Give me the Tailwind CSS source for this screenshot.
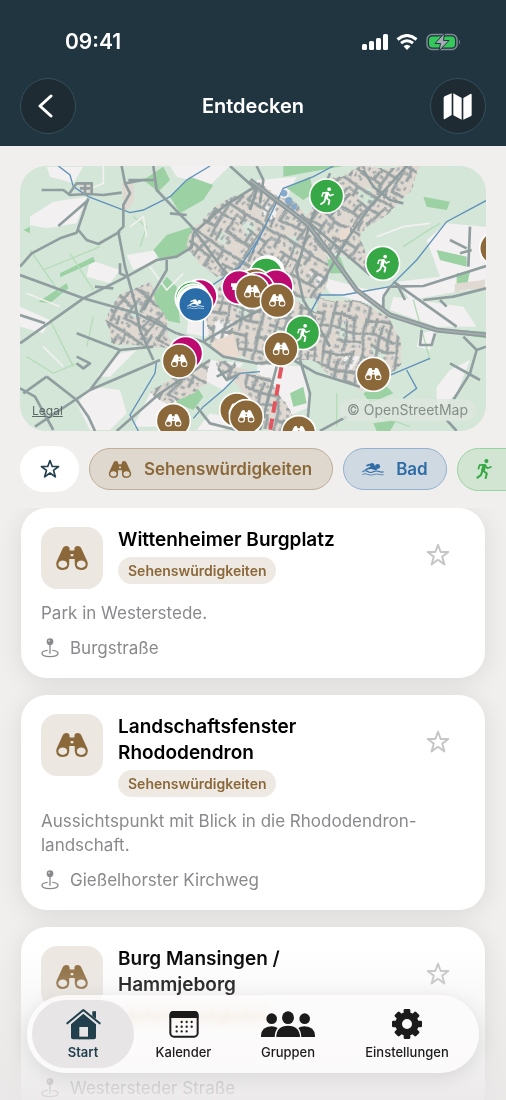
<!DOCTYPE html>
<html lang="de">
<head>
  <meta charset="UTF-8" />
  <meta name="viewport" content="width=device-width, initial-scale=1.0"/>
  <title>Entdecken</title>
  <script src="https://cdn.jsdelivr.net/npm/@tailwindcss/browser@4"></script>
</head>
<body class="bg-[#f0efed] font-['Inter','Liberation_Sans',sans-serif] text-black">

  <!-- Shared icons -->
  <svg class="hidden">
    <symbol id="binoculars" viewBox="0 0 92 70">
      <path fill="currentColor" fill-rule="evenodd" d="M18 9Q21 0 30 0Q38 0 39 8V13H53V8Q54 0 62 0Q71 0 74 9L90 44Q92 48 92 53Q91 70 73 70Q54 70 54 52V38H38V52Q38 70 19 70Q1 70 0 53Q0 48 2 44ZM42 23V30H50V23ZM19 42A13 11 0 1 0 19 64A13 11 0 1 0 19 42ZM73 42A13 11 0 1 0 73 64A13 11 0 1 0 73 42Z"/>
    </symbol>
    <symbol id="runner" viewBox="0 0 46 58">
      <circle cx="30" cy="6" r="6" fill="currentColor"/>
      <g fill="none" stroke="currentColor" stroke-linecap="round" stroke-linejoin="round">
        <path stroke-width="11" d="M24 20L20 32"/>
        <path stroke-width="5" d="M22 17L10 18L7 28M26 18L33 27L43 23"/>
        <path stroke-width="6" d="M21 34L31 42L28 55M18 36L14 47L4 54"/>
      </g>
    </symbol>
    <symbol id="swimmer" viewBox="0 0 62 38">
      <circle cx="44" cy="12" r="7" fill="currentColor"/>
      <path fill="currentColor" d="M13 7L28 2Q31 1 33 4L43 21Q36 24 30 20Q22 17 12 23L7 21L24 12L22 9L14 12Q10 10 13 7Z"/>
      <path fill="none" stroke="currentColor" stroke-width="3" d="M1 27Q8 21 16 26T32 27T48 26T61 27"/>
      <path fill="none" stroke="currentColor" stroke-width="2" d="M1 35Q8 30 16 34T32 35T48 34T61 35"/>
    </symbol>
    <symbol id="star" viewBox="0 0 24 24">
      <path fill="none" stroke="currentColor" stroke-width="2" stroke-linejoin="round" d="M12 1.8L14.7 9H22.3L16.2 13.6L18.4 21.4L12 16.8L5.6 21.4L7.8 13.6L1.7 9H9.3Z"/>
    </symbol>
    <symbol id="place" viewBox="0 0 52 60">
      <circle cx="26" cy="11" r="10" fill="currentColor"/>
      <circle cx="23" cy="8" r="3" fill="#fff" opacity=".6"/>
      <path fill="none" stroke="currentColor" stroke-width="4" stroke-linecap="round" d="M26 20V46"/>
      <path fill="none" stroke="currentColor" stroke-width="4" d="M19 37C8 38 2 42 2 46C2 52 12 56 26 56S50 52 50 46C50 42 44 38 33 37"/>
    </symbol>
    <symbol id="pin-sight" viewBox="0 0 108 108">
      <circle cx="54" cy="54" r="51" fill="#8a683a" stroke="#fff" stroke-width="5"/>
      <use href="#binoculars" x="29" y="34" width="50" height="38" color="#fff"/>
    </symbol>
    <symbol id="pin-run" viewBox="0 0 108 108">
      <circle cx="54" cy="54" r="51" fill="#36a946" stroke="#fff" stroke-width="5"/>
      <use href="#runner" x="33" y="28" width="44" height="54" color="#fff"/>
    </symbol>
    <symbol id="pin-swim" viewBox="0 0 108 108">
      <circle cx="54" cy="54" r="51" fill="#2b6da8" stroke="#fff" stroke-width="5"/>
      <use href="#swimmer" x="28" y="37" width="52" height="32" color="#fff"/>
    </symbol>
    <symbol id="pin-food" viewBox="0 0 108 108">
      <circle cx="54" cy="54" r="51" fill="#bd0a70" stroke="#fff" stroke-width="5"/>
      <path d="M30 42H50V52H42V62H34V52H30Z" fill="#fff"/>
    </symbol>
  </svg>

  <div class="relative flex h-dvh flex-col overflow-hidden">

    <header class="bg-[#213540] pb-3 text-white">
      <!-- Status bar -->
      <div class="flex items-center justify-between pt-7 pr-11 pl-[65px]">
        <span class="text-[21px] leading-7 font-semibold">09:41</span>
        <div class="flex items-center gap-2">
          <svg class="h-4 w-[26px]" viewBox="0 0 26 16" fill="#fff">
            <rect x="0" y="10" width="5" height="6" rx="1.5"/><rect x="7" y="7" width="5" height="9" rx="1.5"/>
            <rect x="14" y="4" width="5" height="12" rx="1.5"/><rect x="21" y="0" width="5" height="16" rx="1.5"/>
          </svg>
          <svg class="h-4 w-[22px]" viewBox="0 0 22 16" fill="none" stroke="#fff" stroke-width="3">
            <path d="M1.5 5.5Q11 -2.500 20.500 5.500M5 9.200Q11 4.200 17 9.200"/>
            <path d="M7.500 12.300Q11 9.300 14.500 12.300L11 16Z" fill="#fff" stroke="none"/>
          </svg>
          <svg class="h-[18px] w-[36px]" viewBox="0 0 36 18">
            <rect x="1" y="1.500" width="30" height="15" rx="5" fill="none" stroke="#7d8a91" stroke-width="1.500"/>
            <rect x="3" y="3.500" width="26" height="11" rx="3.500" fill="#35c759"/>
            <path d="M33 6.500V11.500Q35 9 33 6.500Z" fill="#7d8a91"/>
            <path d="M18.500 0L9 10.500H14.500L13 18L23 7.500H17.500Z" fill="#a3adb1" stroke="#213540" stroke-width="1"/>
          </svg>
        </div>
      </div>
      <!-- Title bar -->
      <div class="flex items-center justify-between px-5 pt-[22px]">
        <button aria-label="Zurück" class="grid size-14 place-items-center rounded-full border border-[#34505e] bg-[#1e2b32]">
          <svg class="mr-1 h-6 w-4" viewBox="0 0 16 24" fill="none" stroke="#fff" stroke-width="3" stroke-linecap="round" stroke-linejoin="round"><path d="M13 2L2 12L13 22"/></svg>
        </button>
        <h1 class="text-xl leading-7 font-semibold">Entdecken</h1>
        <button aria-label="Karte" class="grid size-14 place-items-center rounded-full border border-[#34505e] bg-[#1e2b32]">
          <svg class="h-[27px] w-[29px]" viewBox="0 0 87 81" fill="#fff">
            <path d="M2 15Q2 12 5 10L26 1V66L6 78Q2 80 2 75ZM31 1L56 15V80L31 67ZM61 15L82 3Q86 1 86 6V65Q86 68 83 70L61 80Z"/>
          </svg>
        </button>
      </div>
    </header>

    <main class="flex min-h-0 flex-1 flex-col">
      <!-- Map -->
      <section class="px-5 pt-5">
        <div class="relative overflow-hidden rounded-[26px]">
          <svg class="block w-full" viewBox="30 18 1398 795">
            <defs>
              <pattern id="streets-a" width="118" height="124" patternUnits="userSpaceOnUse" patternTransform="rotate(32)">
                <path fill="none" stroke="#98a2a3" stroke-width="9" d="M0 8H118M0 48H76M70 92H118M38 8V124M76 30V92M0 92H38M100 8V48M14 48V92M58 92V124"/>
                <path fill="none" stroke="#a3abac" stroke-width="11" stroke-dasharray="7 15 10 19" d="M0 26H118M0 70H118M20 110H118M90 0V124"/>
              </pattern>
              <pattern id="streets-b" width="104" height="118" patternUnits="userSpaceOnUse" patternTransform="rotate(12)">
                <path fill="none" stroke="#98a2a3" stroke-width="9" d="M6 0V118M30 0V54M54 20V118M80 0V70M0 10H80M6 54H104M30 86H104M80 70V86"/>
                <path fill="none" stroke="#a7afb0" stroke-width="9" stroke-dasharray="6 15 11 10" d="M0 32H104M0 70H54M10 104H104"/>
              </pattern>
              <!-- Bends the street grid so that blocks look grown -->
              <filter id="bend" x="0" y="0" width="100%" height="100%">
                <feTurbulence type="fractalNoise" baseFrequency="0.012" numOctaves="1" seed="4"/>
                <feDisplacementMap in="SourceGraphic" scale="40" xChannelSelector="R" yChannelSelector="G"/>
              </filter>
            </defs>
            <rect x="30" y="18" width="1398" height="795" fill="#d4e6d8"/>
            <!-- Open land -->
            <g fill="#f2f0f0">
              <path d="M60 170L130 125L230 110L200 190L110 205L60 195ZM110 20H220L190 70L120 50ZM480 18H660L600 75L500 50ZM350 285L440 270L440 300L370 330ZM240 300L330 330L300 370L230 350Z"/>
              <path d="M250 680L330 690L350 760L300 810H240L200 730ZM330 580L380 570L300 650L260 650ZM420 700L480 660L540 700L440 800H370ZM30 440L120 480L100 520L30 500Z"/>
              <path d="M930 350L1080 390L1140 380L1110 440L960 400ZM1250 240L1310 190L1428 200V380L1200 420L1160 365L1290 350ZM1150 410L1360 440L1400 500L1280 500L1140 450ZM740 610L880 620L900 740L760 800ZM1230 520L1280 510L1260 570L1220 560ZM1320 630L1380 600L1340 700L1280 760V680Z"/>
              <path d="M540 430L640 380L680 420L590 530L530 520ZM740 60L860 50L820 140L740 120ZM600 600L700 610L640 690L580 660ZM690 780L640 810H560L600 760Z"/>
            </g>
            <!-- Woods -->
            <g fill="#9cd1a4">
              <path d="M430 270L470 225L545 200L550 250L500 290L450 298ZM400 60L460 20L480 60L445 95ZM480 110L540 50L610 75L580 120L510 160ZM420 420L470 350L500 380L510 490L460 480Z"/>
              <path d="M500 690L560 680L580 710L550 750L500 730ZM820 50L1000 18H820ZM830 85L900 50L910 100L880 120ZM1240 110L1320 125L1310 150L1250 140ZM1280 270L1370 290V320L1290 300ZM950 300L990 290L1010 340L960 340Z"/>
              <path d="M150 340L250 290L255 305L150 352ZM85 425L170 370L175 385L120 430ZM40 210L60 200V220ZM1340 340L1380 335L1370 380H1340ZM1090 790L1160 780L1140 813H1100ZM840 700L880 680L890 730L850 740ZM1060 700L1120 670L1150 700L1080 730ZM1350 510L1428 515V535L1360 525Z"/>
            </g>
            <!-- Field borders -->
            <g fill="none" stroke="#b4dcb9" stroke-width="4">
              <path d="M60 270L150 400M100 330L270 260M180 280L250 390M50 590L130 640L200 610M120 480L190 620M250 470L230 560M370 170L410 200L390 260M1180 260L1240 220L1290 190M1210 420L1260 600M980 700V800M1060 750L1200 800"/>
            </g>
            <path fill="none" stroke="#f2f0f0" stroke-width="5" d="M360 200L400 170L410 230M1100 230L1180 200L1260 190M280 18V70L230 90M50 400L150 440M100 560L160 620M420 320L470 390L520 340"/>
            <!-- Built-up areas -->
            <g filter="url(#bend)">
              <g fill="#e0d9d2">
                <path d="M530 270L550 200L640 130L750 70L860 130L960 270L930 420L800 400L700 320L620 350Z"/>
                <path d="M640 330L800 390L920 450L900 600L750 610L600 545L590 460Z"/>
                <path d="M930 410L1090 440L1180 530L1170 620L1050 690L880 590Z"/>
                <path d="M960 60L1060 18H1240L1200 90L1120 170L1050 230L1080 340L960 260L880 180Z"/>
                <path d="M330 400L410 375L470 480L490 560L400 560L300 545L285 480Z"/>
                <path d="M620 600L780 650L860 780L900 813H740L690 690Z"/>
                <path d="M430 690L540 630L600 600L590 670L480 740ZM335 70L370 80L365 130L340 160ZM205 70H250V105H205ZM1340 375L1425 360V390L1340 400Z"/>
              </g>
              <g fill="#d4e6d8">
                <path d="M690 190L730 180L725 220L700 230ZM830 230L870 240L860 280ZM680 440L720 430V470L690 475ZM800 500L850 490L840 540L800 535ZM980 500L1010 490L1020 530L990 540ZM1080 560L1130 570L1110 610ZM1040 90L1080 80L1090 120L1050 130ZM360 440L390 430L400 470L370 470ZM610 230L640 220L650 260Z"/>
              </g>
              <path fill="#f2f0f0" d="M760 120L810 130L800 180L765 170ZM620 480L670 490L650 540L610 520ZM900 340L940 350L920 390ZM1000 590L1040 600L1020 640Z"/>
              <g fill="url(#streets-a)">
                <path d="M530 270L550 200L640 130L750 70L860 130L960 270L930 420L800 400L700 320L620 350Z"/>
                <path d="M960 60L1060 18H1240L1200 90L1120 170L1050 230L1080 340L960 260L880 180Z"/>
                <path d="M330 400L410 375L470 480L490 560L400 560L300 545L285 480Z"/>
                <path d="M430 690L540 630L600 600L590 670L480 740ZM620 610L680 600L700 660L640 650Z"/>
              </g>
              <g fill="url(#streets-b)">
                <path d="M640 330L800 390L920 450L900 600L750 610L600 545L590 460Z"/>
                <path d="M930 410L1090 440L1180 530L1170 620L1050 690L880 590Z"/>
                <path d="M700 640L780 650L860 780L900 813H740Z"/>
              </g>
            </g>
            <path fill="#e9dbd0" d="M600 550L670 520L690 590L640 590ZM990 210L1020 200L1020 235L990 240Z"/>
            <!-- Streams -->
            <g fill="none" stroke="#5f91ba" stroke-width="4">
              <path d="M145 18L180 45L190 80L235 110L360 158L400 150L480 110L530 60L600 18M750 230L690 320L600 380L580 430V540M440 600L435 640L360 765L385 813M550 775L580 740L640 690L690 640L750 635"/>
              <path d="M970 18L910 50L820 85L760 210L725 280M1428 122L1310 185L1220 300L1140 380L1000 405L930 405L900 460M1085 680L1130 650L1260 595M1190 630L1220 685L1180 715"/>
            </g>
            <g fill="#86aacb"><circle cx="822" cy="100" r="10"/><circle cx="836" cy="122" r="11"/><circle cx="852" cy="140" r="9"/></g>
            <!-- Roads -->
            <g fill="none" stroke="#919e9f" stroke-width="8" stroke-linejoin="round">
              <path d="M30 320L65 280L150 235L200 218L235 115M95 90H160L180 105L235 102L280 105L335 98M235 120L145 198M205 210L230 240L265 252L330 215M335 18L345 70L360 100L340 135V200L325 215L345 320L375 430L390 510L430 600"/>
              <path d="M30 345L220 415L380 460L500 520M30 550L220 415L350 350L440 300L500 290L545 262L550 220M30 465L105 490M470 300V330L400 450M200 520L330 570L430 560M330 570L240 690M75 800L240 690L450 600M30 685L75 710L130 810"/>
              <path d="M110 650L200 720L235 770L255 813M110 650L40 700M320 813L450 700L600 600M430 18L440 90L545 200L640 330L700 390M750 70L640 140L550 220M660 18L740 90L720 150M345 70L400 60H440"/>
              <path d="M200 590L240 610L220 625L200 610M330 310V340L350 350M255 380L310 385M175 105L200 70H245V105M210 85H240M225 70V105M355 60H410M480 160L530 165"/>
              <path d="M500 520L580 545L640 590L740 610L850 600L920 640L1050 680M580 545L690 480L790 430M560 740L600 790L680 810M900 190L860 330L880 420L960 560M800 620L750 810M870 600L900 700L890 813M625 625L650 660L690 640M620 650L660 630"/>
              <path d="M1190 18L1080 140L1010 240L930 380M960 40L900 190L1080 345M1120 410L1140 380L1240 378L1428 318M1240 420L1330 410L1428 385M1150 365L1340 500M1360 530L1400 570L1380 640L1330 720M1320 610L1410 660M1380 200L1375 320M1320 240L1370 265M1120 410V450M1235 510L1230 555H1265L1275 520M1400 570L1428 560"/>
              <path d="M740 18L760 60L750 130M1060 30L1090 80L1140 120L1180 130M1020 100L960 170M930 813L1010 770M1310 780L1340 813M1350 280L1385 270M1290 420L1310 440M1160 370L1185 420"/>
            </g>
            <path fill="none" stroke="#8e9a9c" stroke-width="15" d="M720 60L890 190L960 280L1040 390L1140 465L1280 510L1428 525"/>
            <path fill="none" stroke="#a5afb0" stroke-width="5" d="M720 60L890 190L960 280L1040 390L1140 465L1280 510L1428 525"/>
            <path fill="none" stroke="#e0555e" stroke-width="12" stroke-dasharray="34 18" d="M814 622L780 813"/>
            <!-- Pins -->
            <use href="#pin-run" x="896" y="54" width="108" height="108"/>
            <use href="#pin-run" x="1064" y="256" width="108" height="108"/>
            <use href="#pin-sight" x="1406" y="211" width="108" height="108"/>
            <use href="#pin-food" x="516" y="355" width="108" height="108"/>
            <g stroke="#fff" stroke-width="5" fill="#36a946">
              <circle cx="546" cy="415" r="50"/><circle cx="548" cy="419" r="46" fill="#fff"/><circle cx="551" cy="423" r="50"/><circle cx="554" cy="428" r="50" fill="#fff"/>
            </g>
            <use href="#pin-swim" x="503" y="379" width="108" height="108"/>
            <g stroke="#fff" stroke-width="5" fill="#36a946">
              <circle cx="772" cy="338" r="50" fill="#fff"/><circle cx="768" cy="344" r="50"/><circle cx="735" cy="376" r="50" fill="#8a683a"/>
            </g>
            <use href="#pin-food" x="633" y="328" width="108" height="108"/>
            <use href="#pin-food" x="744" y="326" width="108" height="108"/>
            <use href="#pin-food" x="688" y="334" width="108" height="108"/>
            <use href="#pin-sight" x="673" y="341" width="108" height="108"/>
            <use href="#pin-sight" x="748" y="368" width="108" height="108"/>
            <use href="#pin-run" x="824" y="464" width="108" height="108"/>
            <use href="#pin-sight" x="759" y="513" width="108" height="108"/>
            <use href="#pin-food" x="473" y="526" width="108" height="108"/>
            <use href="#pin-sight" x="454" y="549" width="108" height="108"/>
            <use href="#pin-sight" x="1036" y="589" width="108" height="108"/>
            <use href="#pin-sight" x="436" y="728" width="108" height="108"/>
            <use href="#pin-sight" x="626" y="696" width="108" height="108"/>
            <use href="#pin-sight" x="655" y="716" width="108" height="108"/>
            <use href="#pin-sight" x="812" y="764" width="108" height="108"/>
          </svg>
          <a href="#" class="absolute bottom-3 left-3 text-xs leading-4 text-[#5d6a67] underline">Legal</a>
          <span class="absolute right-[10px] bottom-[10px] rounded-full bg-[#dde6de]/80 px-2 text-sm leading-[22px] text-[#858d89]">© OpenStreetMap</span>
        </div>
      </section>

      <!-- Filters -->
      <div class="flex items-center gap-[10px] overflow-hidden pt-[15px] pb-4 pl-5">
        <button aria-label="Favoriten" class="grid h-[46px] w-[59px] shrink-0 place-items-center rounded-full bg-white text-[#213f4d]">
          <svg class="size-5"><use href="#star"/></svg>
        </button>
        <button class="flex h-[42px] shrink-0 items-center gap-3 rounded-full border border-[#bfae98] bg-[#dfd8ce] pr-5 pl-[18px] text-[#8a683a]">
          <svg class="h-[17px] w-6"><use href="#binoculars"/></svg>
          <span class="text-[17px] leading-6 font-semibold">Sehenswürdigkeiten</span>
        </button>
        <button class="flex h-[42px] shrink-0 items-center gap-3 rounded-full border border-[#93b2d0] bg-[#cfd9e1] px-[18px] text-[#2f6ca6]">
          <svg class="h-[14px] w-[22px]"><use href="#swimmer"/></svg>
          <span class="text-[17px] leading-6 font-semibold">Bad</span>
        </button>
        <button aria-label="Sport" class="flex h-[43px] w-[120px] shrink-0 items-center rounded-full border border-[#98d3a1] bg-[#d1e5d2] px-[18px] text-[#36a946]">
          <svg class="h-5 w-4"><use href="#runner"/></svg>
        </button>
      </div>

      <!-- Places -->
      <div class="min-h-0 flex-1 space-y-[17px] overflow-hidden px-[21px]">
        <article class="rounded-[26px] bg-white px-5 pt-[19px] pb-[18px] shadow-[0_4px_26px_rgba(0,0,0,0.09)]">
          <div class="flex items-start">
            <div class="grid size-[62px] shrink-0 place-items-center rounded-2xl bg-[#ece7e1] text-[#8a683a]">
              <svg class="h-6 w-8"><use href="#binoculars"/></svg>
            </div>
            <div class="ml-[15px] flex-1">
              <h2 class="text-[19px] leading-[26px] font-semibold">Wittenheimer Burgplatz</h2>
              <span class="mt-1 inline-block rounded-full bg-[#efe9e3] px-[10px] align-top text-sm leading-[27px] font-semibold text-[#8a683a]">Sehenswürdigkeiten</span>
            </div>
            <button aria-label="Merken" class="mt-[6px] mr-[5px] grid size-11 place-items-center text-[#c6c6c8]"><svg class="size-6"><use href="#star"/></svg></button>
          </div>
          <p class="mt-3 text-[17px] leading-6 text-[#8a8a8e]">Park in Westerstede.</p>
          <p class="mt-[11px] flex items-center gap-[11px] text-[17px] leading-6 text-[#8a8a8e]"><svg class="h-5 w-[18px]"><use href="#place"/></svg>Burgstraße</p>
        </article>

        <article class="rounded-[26px] bg-white px-5 pt-[19px] pb-[18px] shadow-[0_4px_26px_rgba(0,0,0,0.09)]">
          <div class="flex items-start">
            <div class="grid size-[62px] shrink-0 place-items-center rounded-2xl bg-[#ece7e1] text-[#8a683a]">
              <svg class="h-6 w-8"><use href="#binoculars"/></svg>
            </div>
            <div class="ml-[15px] flex-1 pr-6">
              <h2 class="text-[19px] leading-[26px] font-semibold">Landschaftsfenster Rhododendron</h2>
              <span class="mt-1 inline-block rounded-full bg-[#efe9e3] px-[10px] align-top text-sm leading-[27px] font-semibold text-[#8a683a]">Sehenswürdigkeiten</span>
            </div>
            <button aria-label="Merken" class="mt-[6px] mr-[5px] grid size-11 place-items-center text-[#c6c6c8]"><svg class="size-6"><use href="#star"/></svg></button>
          </div>
          <p class="mt-3 text-[17px] leading-6 text-[#8a8a8e]">Aussichtspunkt mit Blick in die Rhododendron-<wbr>landschaft.</p>
          <p class="mt-[11px] flex items-center gap-[11px] text-[17px] leading-6 text-[#8a8a8e]"><svg class="h-5 w-[18px]"><use href="#place"/></svg>Gießelhorster Kirchweg</p>
        </article>

        <article class="rounded-[26px] bg-white px-5 pt-[19px] pb-[18px] shadow-[0_4px_26px_rgba(0,0,0,0.09)]">
          <div class="flex items-start">
            <div class="grid size-[62px] shrink-0 place-items-center rounded-2xl bg-[#ece7e1] text-[#8a683a]">
              <svg class="h-6 w-8"><use href="#binoculars"/></svg>
            </div>
            <div class="ml-[15px] flex-1 pr-10">
              <h2 class="text-[19px] leading-[26px] font-semibold">Burg Mansingen / Hammjeborg</h2>
              <span class="mt-1 inline-block rounded-full bg-[#efe9e3] px-[10px] align-top text-sm leading-[27px] font-semibold text-[#8a683a]">Sehenswürdigkeiten</span>
            </div>
            <button aria-label="Merken" class="mt-[6px] mr-[5px] grid size-11 place-items-center text-[#c6c6c8]"><svg class="size-6"><use href="#star"/></svg></button>
          </div>
          <p class="mt-3 h-6"></p>
          <p class="mt-[11px] flex items-center gap-[11px] text-[17px] leading-6 text-[#8a8a8e]"><svg class="h-5 w-[18px]"><use href="#place"/></svg>Westersteder Straße</p>
        </article>
      </div>
    </main>

    <!-- Fade behind the tab bar -->
    <div class="pointer-events-none absolute inset-x-0 bottom-0 h-[150px] bg-linear-to-b from-[#eceaea]/0 to-[#e9e7e7]/85"></div>

    <!-- Tab bar -->
    <nav class="absolute inset-x-[27px] bottom-[27px] grid grid-cols-[102fr_99fr_110fr_128fr_3fr] rounded-full bg-[#fdfcfc]/85 p-[5px] text-[13px] leading-4 font-medium text-[#1b1b1b] shadow-[0_4px_20px_rgba(0,0,0,0.1)] backdrop-blur-[2px] backdrop-saturate-200">
      <a href="#" class="flex h-[68px] flex-col items-center gap-1 rounded-full bg-[#e7e5e5] pt-2 font-semibold text-[#213f4d]">
        <svg class="h-8 w-[35px]" viewBox="0 0 105 96">
          <path fill="none" stroke="currentColor" stroke-width="6" stroke-linecap="round" stroke-linejoin="round" d="M4 46L52 6L101 46"/>
          <path fill="currentColor" d="M79 10H90V32L79 24ZM52 17L90 49V88Q90 94 84 94H66V57H40V94H21Q15 94 15 88V49Z"/>
          <path fill="currentColor" d="M38 86H68V94H38Z"/>
        </svg>
        <span>Start</span>
      </a>
      <a href="#" class="flex h-[68px] flex-col items-center gap-1 rounded-full pt-2">
        <svg class="h-8 w-[30px]" viewBox="0 0 90 96">
          <rect x="4" y="12" width="82" height="74" rx="11" fill="none" stroke="currentColor" stroke-width="6"/>
          <path fill="currentColor" d="M2 30V20Q2 9 13 9H77Q88 9 88 20V30Z"/>
          <path fill="none" stroke="currentColor" stroke-width="7" stroke-linecap="round" stroke-dasharray="0 15" d="M38 42H70M23 56H70M23 70H55"/>
        </svg>
        <span>Kalender</span>
      </a>
      <a href="#" class="flex h-[68px] flex-col items-center gap-1 rounded-full pt-2">
        <svg class="h-8 w-[54px]" viewBox="0 0 162 96" fill="currentColor">
          <circle cx="32" cy="32" r="16"/><circle cx="131" cy="32" r="16"/><ellipse cx="81" cy="29" rx="18" ry="19"/>
          <path d="M0 87Q-1 56 32 55Q43 55 50 60Q42 69 41 87ZM162 87Q163 56 130 55Q119 55 112 60Q120 69 121 87ZM46 87Q46 54 81 53Q116 54 117 87Z"/>
        </svg>
        <span>Gruppen</span>
      </a>
      <a href="#" class="flex h-[68px] flex-col items-center gap-1 rounded-full pt-2">
        <svg class="size-8" viewBox="0 0 96 96">
          <circle cx="48" cy="48" r="25" fill="none" stroke="currentColor" stroke-width="20"/>
          <g fill="currentColor">
            <rect x="38" y="3" width="20" height="18" rx="4"/><rect x="38" y="3" width="20" height="18" rx="4" transform="rotate(45 48 48)"/>
            <rect x="38" y="3" width="20" height="18" rx="4" transform="rotate(90 48 48)"/><rect x="38" y="3" width="20" height="18" rx="4" transform="rotate(135 48 48)"/>
            <rect x="38" y="3" width="20" height="18" rx="4" transform="rotate(180 48 48)"/><rect x="38" y="3" width="20" height="18" rx="4" transform="rotate(225 48 48)"/>
            <rect x="38" y="3" width="20" height="18" rx="4" transform="rotate(270 48 48)"/><rect x="38" y="3" width="20" height="18" rx="4" transform="rotate(315 48 48)"/>
          </g>
        </svg>
        <span>Einstellungen</span>
      </a>
    </nav>
  </div>

</body>
</html>
